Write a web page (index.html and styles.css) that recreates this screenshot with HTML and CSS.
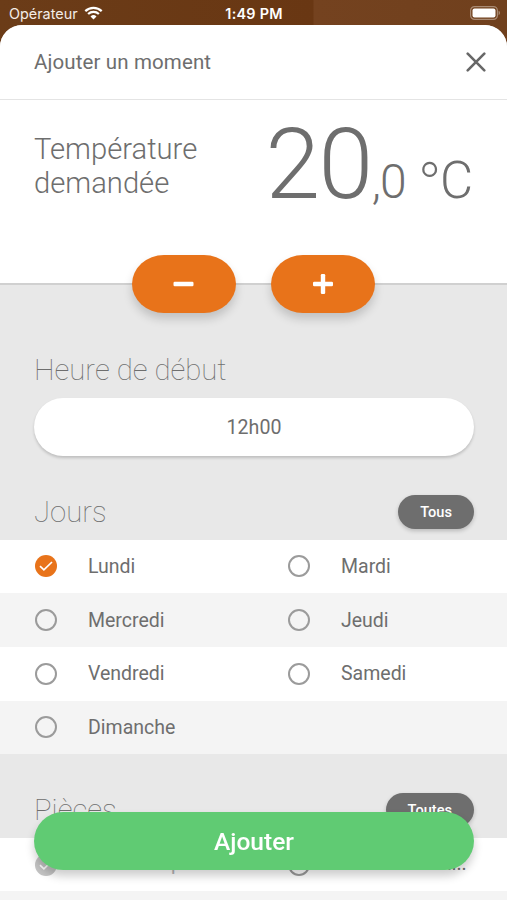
FILE: index.html
```html
<!DOCTYPE html>
<html lang="fr">
  <head>
    <meta charset="UTF-8" />
    <meta name="viewport" content="width=device-width, initial-scale=1.0" />
    <title>Ajouter un moment</title>
    <link rel="stylesheet" href="styles.css">
  </head>
  <body>
    <div class="status-bar">
      <div class="carrier">
        <span>Opérateur</span>
        <svg class="wifi" width="19" height="14" viewBox="0 0 19 14">
          <path d="M1.3 5.1a11.8 11.8 0 0 1 16.4 0M4.1 8a7.8 7.8 0 0 1 10.8 0" fill="none" stroke="#fff" stroke-width="2.2" />
          <path d="M9.5 13.5l-3-3.1a4.4 4.4 0 0 1 6 0z" fill="#fff" />
        </svg>
      </div>
      <span class="time">1:49 PM</span>
      <svg class="battery" width="31" height="14" viewBox="0 0 31 14">
        <rect x="0.6" y="0.6" width="26.8" height="12.8" rx="4" fill="none" stroke="#a98a73" stroke-width="1.2" />
        <rect x="2.5" y="2.5" width="23" height="9" rx="2" fill="#fff" />
        <path d="M28.6 4.8v4.4a2.4 2.4 0 0 0 0-4.4z" fill="#a98a73" />
      </svg>
    </div>
    <div class="modal">
      <div class="modal-header">
        <h1>Ajouter un moment</h1>
        <svg class="close" width="20" height="20" viewBox="0 0 20 20">
          <path d="M1.7 1.7l16.6 16.6M18.3 1.7L1.7 18.3" stroke="#686868" stroke-width="2.6" stroke-linecap="round" />
        </svg>
      </div>
      <div class="temperature">
        <p class="temperature-label">Température<br>demandée</p>
        <p class="temperature-value">20<span class="decimal">,0</span><span class="degree">°</span><span class="unit">C</span></p>
        <div class="steps">
          <button class="step" aria-label="Diminuer">
            <svg width="24" height="24" viewBox="0 0 24 24" fill="#fff"><rect x="1.5" y="9.8" width="20" height="4.4" rx="1.2" /></svg>
          </button>
          <button class="step" aria-label="Augmenter">
            <svg width="24" height="24" viewBox="0 0 24 24" fill="#fff"><rect x="2" y="9.8" width="20" height="4.4" rx="1.2" /><rect x="9.8" y="2" width="4.4" height="20" rx="1.2" /></svg>
          </button>
        </div>
      </div>

      <div class="section-title start"><h2>Heure de début</h2></div>
      <div class="hour">12h00</div>

      <div class="section-title">
        <h2>Jours</h2>
        <button class="all">Tous</button>
      </div>
      <div class="options">
        <div class="row">
          <div class="option"><span class="radio checked"><svg width="16" height="12" viewBox="0 0 16 12"><path d="M2 6.1l3.9 3.7L14 2" /></svg></span>Lundi</div>
          <div class="option"><span class="radio"></span>Mardi</div>
        </div>
        <div class="row">
          <div class="option"><span class="radio"></span>Mercredi</div>
          <div class="option"><span class="radio"></span>Jeudi</div>
        </div>
        <div class="row">
          <div class="option"><span class="radio"></span>Vendredi</div>
          <div class="option"><span class="radio"></span>Samedi</div>
        </div>
        <div class="row">
          <div class="option"><span class="radio"></span>Dimanche</div>
        </div>
      </div>

      <div class="section-title">
        <h2>Pièces</h2>
        <button class="all">Toutes</button>
      </div>
      <div class="options rooms">
        <div class="row">
          <div class="option disabled"><span class="radio checked"><svg width="16" height="12" viewBox="0 0 16 12"><path d="M2 6.1l3.9 3.7L14 2" /></svg></span><span class="name">Chambre parents</span></div>
          <div class="option"><span class="radio"></span><span class="name">Chambre am...</span></div>
        </div>
        <div class="row"></div>
      </div>
    </div>
    <button class="submit">Ajouter</button>
  </body>
</html>
```

FILE: styles.css
```css
* {
  box-sizing: border-box;
}
body {
  margin: 0;
  height: 900px;
  overflow: hidden;
  font-family: Roboto, sans-serif;
  color: #6e6e6e;
  background: linear-gradient(90deg, #6b3c18 0, #693713 313px, #74421f 314px, #70401d 100%);
}
h1,
h2,
p {
  margin: 0;
}
button {
  border: none;
  padding: 0;
  font-family: inherit;
  color: white;
  cursor: pointer;
}
.status-bar {
  display: grid;
  grid-template-columns: 1fr auto 1fr;
  align-items: center;
  height: 25px;
  padding: 2px 6px 0 9px;
  font-family: Inter, sans-serif;
  font-size: 14.4px;
  color: #f3ece7;
}
.carrier {
  display: flex;
  align-items: center;
  gap: 6px;
}
.wifi {
  margin-top: -2px;
}
.time {
  margin-left: -2px;
  font-weight: 600;
  letter-spacing: 0.25px;
  color: white;
}
.battery {
  justify-self: end;
  margin-top: -2px;
}
.modal {
  height: 875px;
  overflow: hidden;
  border-radius: 22px 22px 0 0;
  background: #e8e8e8;
}
.modal-header {
  display: flex;
  justify-content: space-between;
  align-items: center;
  height: 75px;
  padding: 0 21.5px 0 34px;
  background: white;
  border-bottom: 1px solid #e4e4e4;
}
h1 {
  font-size: 20.5px;
  font-weight: 400;
  letter-spacing: 0.12px;
}
.close {
  margin-top: -1px;
}
.temperature {
  position: relative;
  display: flex;
  justify-content: space-between;
  height: 185px;
  padding: 0 34px;
  background: white;
  border-bottom: 2px solid #d0d0d0;
}
.temperature-label {
  padding-top: 32px;
  font-size: 29.2px;
  font-weight: 300;
  line-height: 34px;
}
.temperature-value {
  padding-top: 6px;
  font-size: 98.5px;
  font-weight: 300;
  line-height: 117px;
  letter-spacing: -1.5px;
  white-space: nowrap;
}
.decimal,
.degree,
.unit {
  font-size: 48px;
  font-weight: 300;
  line-height: 1;
  letter-spacing: 0;
}
.decimal {
  letter-spacing: -1px;
}
.degree {
  margin: 0 -2px 0 12px;
  font-size: 64px;
  font-weight: 200;
  line-height: 0;
  vertical-align: -10px;
}
.unit {
  font-size: 51px;
}
.steps {
  position: absolute;
  left: 132px;
  bottom: -30px;
  display: flex;
  gap: 35px;
}
.step {
  display: flex;
  justify-content: center;
  align-items: center;
  width: 104px;
  height: 58px;
  border-radius: 32px / 29px;
  background: #e8731a;
  box-shadow: 0 6px 10px rgba(0, 0, 0, 0.17);
}
.section-title {
  display: flex;
  justify-content: space-between;
  align-items: center;
  height: 83.5px;
  padding: 28px 33px 0 34px;
}
.section-title.start {
  height: 113px;
  padding-top: 57px;
}
h2 {
  font-size: 29.3px;
  font-weight: 100;
}
.hour {
  display: flex;
  justify-content: center;
  align-items: center;
  height: 58px;
  margin: 0 33px 0 34px;
  border-radius: 29px;
  background: white;
  box-shadow: 0 2px 3px rgba(0, 0, 0, 0.18);
  font-size: 19.6px;
}
.all {
  height: 34px;
  padding: 0 22px;
  border-radius: 17px;
  background: #6e6e6e;
  box-shadow: 0 2px 4px rgba(0, 0, 0, 0.2);
  font-size: 14.6px;
  font-weight: 500;
}
.row {
  display: grid;
  grid-template-columns: 253px 254px;
  height: 53.7px;
  background: white;
}
.row:nth-child(even) {
  background: #f4f4f4;
}
.option {
  display: flex;
  align-items: center;
  padding-left: 35px;
  font-size: 19.5px;
  white-space: nowrap;
}
.rooms .name {
  padding-bottom: 3px;
  letter-spacing: -0.1px;
}
.radio {
  display: flex;
  justify-content: center;
  align-items: center;
  width: 22px;
  height: 22px;
  margin-right: 31px;
  border: 2px solid #9b9b9b;
  border-radius: 50%;
}
.radio.checked {
  border: none;
  background: #e8731a;
}
.radio path {
  fill: none;
  stroke: white;
  stroke-width: 1.7;
}
.disabled {
  color: #b5b5b5;
}
.disabled .radio.checked {
  background: #c4c4c4;
}
.submit {
  position: fixed;
  left: 34px;
  top: 812px;
  width: 440px;
  height: 58px;
  border-radius: 29px;
  background: #60cb73;
  box-shadow: 0 6px 10px rgba(0, 0, 0, 0.2);
  font-size: 24.5px;
  font-weight: 500;
}
```
